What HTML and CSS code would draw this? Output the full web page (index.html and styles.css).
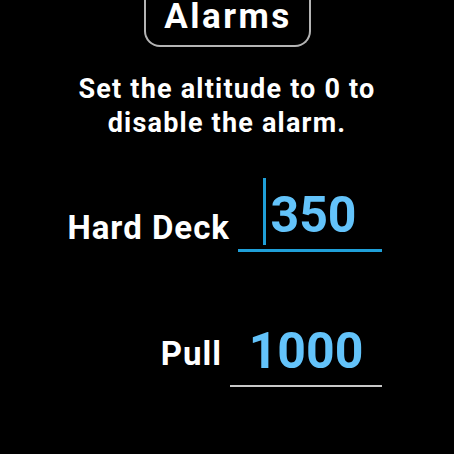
FILE: index.html
```html
<!DOCTYPE html>
<html lang="en">
<head>
    <meta charset="UTF-8">
    <meta name="viewport" content="width=device-width, initial-scale=1.0">
    <title>Alarms</title>
    <link rel="stylesheet" href="styles.css">
</head>
<body>
    <div class="screen">
        <div class="title">Alarms</div>

        <p class="hint">Set the altitude to 0 to disable the alarm.</p>

        <div class="alarm-row hard-deck">
            <label>Hard Deck</label>
            <div class="field focused">
                <span class="value">350</span>
            </div>
        </div>

        <div class="alarm-row pull">
            <label>Pull</label>
            <div class="field">
                <span class="value">1000</span>
            </div>
        </div>
    </div>
</body>
</html>
```

FILE: styles.css
```css
:root {
    --accent-color: #63c3fa;
    --focus-color: #1f9fd8;
    --line-color: #c8c8c8;
}

* {
    margin: 0;
    padding: 0;
    box-sizing: border-box;
    font-family: Roboto, "Noto Sans", Arial, sans-serif;
}

body {
    background: #000;
    color: #fff;
    width: 454px;
    height: 454px;
    overflow: hidden;
}

.screen {
    display: flex;
    flex-direction: column;
}

.title {
    width: 167px;
    margin: -12px auto 0;
    padding: 10px 0 9px 2px;
    border: 2px solid #b4b4b4;
    border-top: none;
    border-radius: 0 0 16px 16px;
    font-size: 35px;
    font-weight: 700;
    letter-spacing: 2.5px;
    line-height: 38px;
    text-align: center;
}

.hint {
    margin: 25px auto 0;
    width: 380px;
    font-size: 27px;
    font-weight: 700;
    letter-spacing: 1.2px;
    line-height: 34px;
    text-align: center;
}

.alarm-row {
    display: flex;
    justify-content: flex-end;
    align-items: flex-end;
    gap: 8px;
    padding-right: 72px;
}

.alarm-row label {
    font-size: 33px;
    font-weight: 700;
    letter-spacing: 1px;
    line-height: 38px;
}

.hard-deck {
    margin-top: 45px;
}

.hard-deck label {
    margin-bottom: 5px;
}

.hard-deck .field {
    width: 144px;
}

.pull {
    margin-top: 69px;
}

.pull label {
    margin-bottom: 14px;
}

.pull .field {
    width: 152px;
}

.field {
    padding-bottom: 4px;
    border-bottom: 2px solid var(--line-color);
    text-align: center;
    color: var(--accent-color);
    font-size: 50px;
    font-weight: 700;
    line-height: 60px;
}

.field.focused {
    border-bottom: 3.5px solid var(--focus-color);
}

.value {
    position: relative;
}

.field.focused .value {
    padding-left: 7px;
}

.field.focused .value::before {
    content: "";
    position: absolute;
    left: 0;
    top: -8px;
    width: 3px;
    height: 67px;
    background: var(--focus-color);
}
```
